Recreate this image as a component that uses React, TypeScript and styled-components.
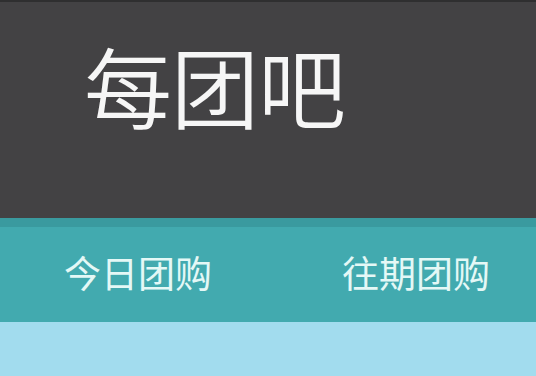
import React, { FC } from "react";
import styled, { createGlobalStyle } from "styled-components";

const GlobalStyle = createGlobalStyle`
  html, body {
    margin: 0;
    padding: 0;
    background: #a2dcee;
  }
  body {
    font-family: "Noto Sans CJK SC", "Noto Sans", sans-serif;
  }
`;

const Page = styled.div`
  display: flex;
  flex-direction: column;
  width: 536px;
  height: 376px;
  overflow: hidden;
`;

const Header = styled.header`
  height: 218px;
  background: #434244;
  border-top: 2px solid #2f2f30;
  box-sizing: border-box;
  display: flex;
  align-items: flex-start;
  padding: 29px 0 0 84px;
`;

const Logo = styled.h1`
  margin: 0;
  font-size: 88px;
  font-weight: 350;
  line-height: 1.2;
  color: #f6f6f6;
  letter-spacing: -1px;
`;

const TabBar = styled.nav`
  height: 104px;
  box-sizing: border-box;
  background: #42aaaf;
  border-top: 9px solid #3a9a9f;
  display: flex;
  align-items: center;
  padding: 0 0 4px 64px;
`;

const Tab = styled.a<{ gap?: number }>`
  font-size: 37px;
  line-height: 1;
  color: #e4f8f6;
  text-decoration: none;
  margin-right: ${({ gap }) => gap ?? 0}px;
`;

const Content = styled.main`
  flex: 1;
  background: #a2dcee;
`;

const App: FC = () => {
  return (
    <Page>
      <GlobalStyle />
      <Header>
        <Logo>每团吧</Logo>
      </Header>
      <TabBar>
        <Tab gap={130}>今日团购</Tab>
        <Tab>往期团购</Tab>
      </TabBar>
      <Content />
    </Page>
  );
};

export default App;
